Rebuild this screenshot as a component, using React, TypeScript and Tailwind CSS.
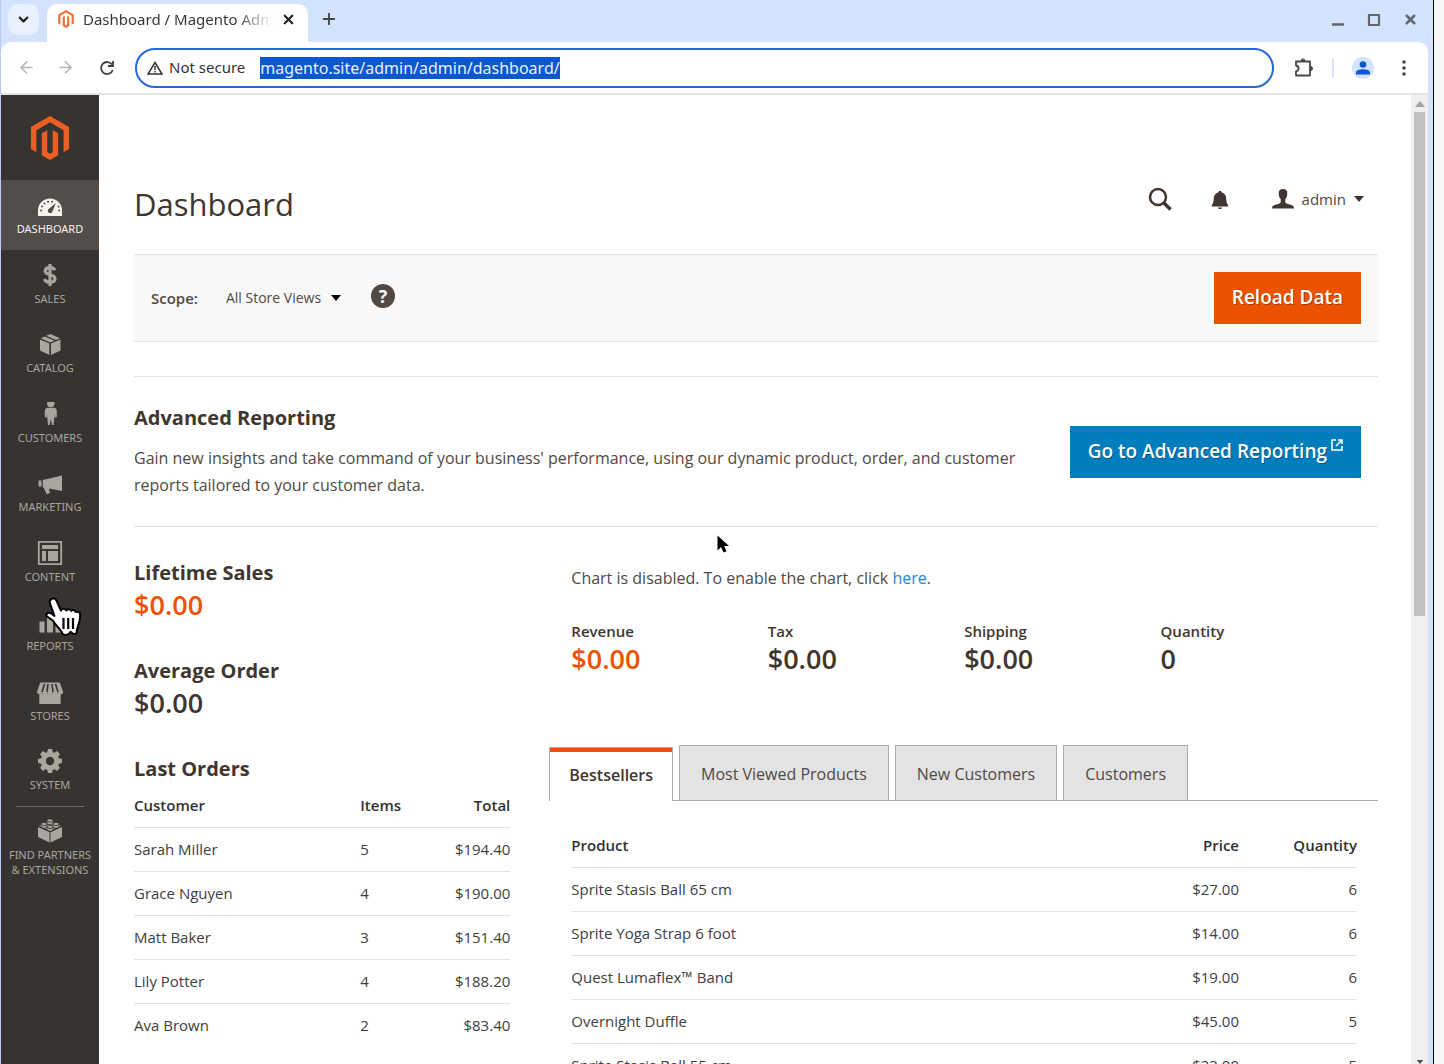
import type { ReactNode } from "react";
import { FaMagento } from "react-icons/fa";
import { ArrowLeft, ArrowRight, Plus, X, ChevronDown } from "lucide-react";

const gearTeeth = [0, 45, 90, 135, 180, 225, 270, 315];

function Icon({ children, className = "size-7" }: { children: ReactNode; className?: string }) {
  return (
    <svg viewBox="0 0 28 28" fill="currentColor" className={className} aria-hidden="true">
      {children}
    </svg>
  );
}

const menu: { label: string; icon: ReactNode }[] = [
  {
    label: "Dashboard",
    icon: (
      <Icon>
        <path d="M2 23v-5.500a12 12 0 0 1 24 0V23z" />
        <g fill="#524d49">
          <circle cx="5" cy="17.500" r="1" />
          <circle cx="6" cy="13.500" r="1" />
          <circle cx="8.500" cy="10.500" r="1" />
          <circle cx="12" cy="8.800" r="1" />
          <circle cx="16" cy="8.800" r="1" />
          <circle cx="22.500" cy="13.500" r="1" />
          <circle cx="23.200" cy="17.500" r="1" />
          <path d="M19.800 10l-3.300 8.500a2.400 2.400 0 1 1-3.700-2.600z" />
        </g>
      </Icon>
    ),
  },
  {
    label: "Sales",
    icon: (
      <Icon>
        <path
          d="M18.800 7.200c-.6-1.600-2.200-2.500-4.800-2.500-3.200 0-4.800 1.300-4.800 3.400 0 4.900 9.800 2.300 9.800 7.400 0 2.400-1.900 3.800-5 3.800-3.100 0-4.900-1.200-5.500-3.300M14 1v22"
          fill="none"
          stroke="currentColor"
          strokeWidth="3.200"
        />
      </Icon>
    ),
  },
  {
    label: "Catalog",
    icon: (
      <Icon>
        <path d="M4 7.500l9.400 4V23L4 18.500zM24.500 7.500L15 11.500V23l9.500-4.500zM4.800 6.200l4-1.700 9.700 4.200-4.300 1.700zM10.300 3.800l4-1.800 9.700 4.200-4 1.800z" />
      </Icon>
    ),
  },
  {
    label: "Customers",
    icon: (
      <Icon>
        <circle cx="14.800" cy="1.500" r="3.700" />
        <path d="M11.800 5.800h6c2 0 3 1.500 3 3.500v5c0 1.500-2 1.500-2 .5v-3.500L17.600 23h-1.600l-1.200-6-1.200 6H12l-1.200-11.700v3.500c0 1-2 1-2-.5v-5c0-2 1-3.500 3-3.500z" />
      </Icon>
    ),
  },
  {
    label: "Marketing",
    icon: (
      <Icon>
        <path d="M2.500 9.500h3v6h-3zM6.800 9L26 4.500v15.500L13 17.500l1 4.500-3.500 1.300-2.700-6.500-1-.3z" />
      </Icon>
    ),
  },
  {
    label: "Content",
    icon: (
      <Icon>
        <path d="M2.800.800h22.400v22.400H2.800z" fill="none" stroke="currentColor" strokeWidth="1.800" />
        <path d="M6 4h16v4H6zM6 10h4v10H6zM12 10h10v10H12z" />
      </Icon>
    ),
  },
  {
    label: "Reports",
    icon: (
      <Icon>
        <path d="M3.500 11.500h5v11h-5zM11 4.500h6v18h-6zM19.500 9h5v13.500h-5z" />
      </Icon>
    ),
  },
  {
    label: "Stores",
    icon: (
      <Icon>
        <path d="M3.300 13.500h21.400V24H3.300z" />
        <path d="M4.300 2.500h19.400l3.600 10H.7z" />
        <path d="M1 12h26c0 3-4.200 3-5.200.5-.8 2.500-4.400 2.500-5.200 0-.8 2.500-4.400 2.500-5.200 0-.8 2.500-4.400 2.500-5.200 0-.8 2.500-5.200 2-5.200-.5z" />
        <path d="M8.500 4l-2.500 8M12 4l-1 8M16 4l1 8M19.500 4l2.500 8" stroke="#373330" strokeWidth="1.600" />
      </Icon>
    ),
  },
  {
    label: "System",
    icon: (
      <Icon>
        <circle cx="14" cy="12" r="6.700" fill="none" stroke="currentColor" strokeWidth="5" />
        {gearTeeth.map((a) => (
          <path key={a} d="M11 4l1-4h4l1 4z" transform={`rotate(${a} 14 12)`} />
        ))}
      </Icon>
    ),
  },
];

function BrickIcon() {
  return (
    <Icon>
      <path d="M2 8l11.500 5.300v10.200L2 18zM26 8l-11.500 5.300v10.200L26 18z" />
      <path d="M3 6.800L14 2l11 4.800-11 5z" />
      <g stroke="#373330" strokeWidth=".8">
        <path d="M11 1.500v2.600c0 2 6 2 6 0V1.500z" />
        <ellipse cx="14" cy="1.500" rx="3" ry="1.600" />
        <path d="M5 5v2.600c0 2 6 2 6 0V5z" />
        <ellipse cx="8" cy="5" rx="3" ry="1.600" />
        <path d="M17 5v2.600c0 2 6 2 6 0V5z" />
        <ellipse cx="20" cy="5" rx="3" ry="1.600" />
        <path d="M11 8v2.600c0 2 6 2 6 0V8z" />
        <ellipse cx="14" cy="8" rx="3" ry="1.600" />
      </g>
    </Icon>
  );
}

function Caret({ className }: { className: string }) {
  return (
    <svg viewBox="0 0 10 6" fill="currentColor" className={className} aria-hidden="true">
      <path d="M0 0h10L5 6z" />
    </svg>
  );
}

function HandCursor() {
  return (
    <svg viewBox="0 0 38 42" className="pointer-events-none absolute -top-0.5 left-[43px] z-10 h-[42px] w-[38px]" aria-hidden="true">
      <path
        d="M7.500 4c2-1.300 4-.3 5 1.700L17 15.500c.6-2.300 4.300-2.500 5.200 0 .8-1.700 4.300-1.700 5 .5 1-1.500 3.800-1.200 4.500 1 1.700-.8 4.500 0 4.500 2.500 0 6-1 9.300-2.700 13.300l-1 5c-1.500 1.800-3.500 1.500-4.500 0l-1.500-1-1.500 2c-2 1.300-5 1.300-6.500 0-1.500-4-6-7.300-9.500-13L2.500 21c-1-2.500 2.500-4.500 5-2.300l3 2.300L6 8.500c-.7-1.800-.5-3.500 1.500-4.500z"
        fill="#fff"
        stroke="#000"
        strokeWidth="2"
        strokeLinejoin="round"
      />
      <path d="M19.500 23v11M24.200 23v11M29 23v11" stroke="#000" strokeWidth="2.200" />
    </svg>
  );
}

const orders = [
  ["Sarah Miller", "5", "$194.40"],
  ["Grace Nguyen", "4", "$190.00"],
  ["Matt Baker", "3", "$151.40"],
  ["Lily Potter", "4", "$188.20"],
  ["Ava Brown", "2", "$83.40"],
];

const products = [
  ["Sprite Stasis Ball 65 cm", "$27.00", "6"],
  ["Sprite Yoga Strap 6 foot", "$14.00", "6"],
  ["Quest Lumaflex™ Band", "$19.00", "6"],
  ["Overnight Duffle", "$45.00", "5"],
  ["Sprite Stasis Ball 55 cm", "$23.00", "5"],
];

const totals = [
  ["Revenue", "$0.00"],
  ["Tax", "$0.00"],
  ["Shipping", "$0.00"],
  ["Quantity", "0"],
];

function BrowserBar() {
  return (
    <header className="shrink-0 bg-[#d3e2fd]">
      <div className="flex h-[42px] items-start pl-[7px]">
        <button aria-label="Search tabs" className="mt-1 flex h-[31px] w-[31px] items-center justify-center rounded-[10px] bg-[#eaf1fe] text-[#222]">
          <ChevronDown size={15} strokeWidth={3.5} />
        </button>
        <div className="ml-2 mt-1 flex h-[38px] w-[261px] items-center rounded-t-[10px] bg-white pb-2 pl-2.5 pr-3">
          <FaMagento className="size-[18px] shrink-0 text-[#f46f35]" />
          <div className="ml-2 w-[190px] overflow-hidden whitespace-nowrap bg-linear-to-r from-[#333] from-80% to-transparent bg-clip-text text-[15px] text-transparent">
            Dashboard / Magento Admin
          </div>
          <button aria-label="Close tab" className="ml-2 text-[#222]">
            <X size={15} strokeWidth={3.5} />
          </button>
        </div>
        <button aria-label="New tab" className="ml-3 mt-2.5 text-[#444]">
          <Plus size={18} strokeWidth={2.5} />
        </button>
        <div className="ml-auto mr-[15px] mt-3 flex items-center gap-[22px] text-[#62666d]">
          <button aria-label="Minimize">
            <svg viewBox="0 0 14 14" className="size-3.5" aria-hidden="true">
              <path d="M1 11.500h12" stroke="currentColor" strokeWidth="2.500" />
            </svg>
          </button>
          <button aria-label="Maximize">
            <svg viewBox="0 0 14 14" className="size-3.5" aria-hidden="true">
              <path d="M2 2h10v10H2z" fill="none" stroke="currentColor" strokeWidth="2.200" />
            </svg>
          </button>
          <button aria-label="Close window">
            <X size={15} strokeWidth={4} />
          </button>
        </div>
      </div>
      <div className="mr-[5px] flex h-[53px] items-center rounded-t-[10px] border-b-2 border-[#e4e4e4] bg-white pl-4 pr-4">
        <button aria-label="Back" className="text-[#b4b4b4]">
          <ArrowLeft size={19} />
        </button>
        <button aria-label="Forward" className="ml-5 text-[#b4b4b4]">
          <ArrowRight size={19} />
        </button>
        <button aria-label="Reload" className="ml-6 text-[#3c3f43]">
          <svg viewBox="0 0 16 16" fill="none" stroke="currentColor" strokeWidth="1.800" className="size-4" aria-hidden="true">
            <path d="M13.800 10A6 6 0 1 1 13 4.500" />
            <path d="M14 1v5h-5" />
          </svg>
        </button>
        <div className="ml-5 flex h-10 flex-1 items-center rounded-full border-2 border-[#2469d8] pl-2.5">
          <svg viewBox="0 0 16 14" fill="none" stroke="#333" strokeWidth="1.500" className="h-3.5 w-4" aria-hidden="true">
            <path d="M8 1.500L15 13H1z" />
            <path d="M8 5v4M8 10v1.500" />
          </svg>
          <span className="ml-1.5 text-[15px] text-[#333]">Not secure</span>
          <input
            aria-label="Address"
            defaultValue="magento.site/admin/admin/dashboard/"
            className="ml-[15px] h-[22px] field-sizing-content bg-[#0b57d0] text-base text-[#e8f0fe] outline-none"
          />
        </div>
        <button aria-label="Extensions" className="ml-5 text-[#45484d]">
          <svg viewBox="0 0 20 20" fill="none" stroke="currentColor" strokeWidth="1.800" strokeLinejoin="round" className="size-5" aria-hidden="true">
            <path d="M2 3.500h14v14H2v-4c3.500-.8 3.500-5.200 0-6z" />
            <path d="M7 2.800a2 1.800 0 0 1 4 0zM16.700 8.500a1.800 2 0 0 1 0 4z" fill="currentColor" strokeWidth="1" />
          </svg>
        </button>
        <span className="ml-[18px] h-[18px] w-0.5 bg-[#d3e2fd]" />
        <button aria-label="Profile" className="ml-[18px] flex size-[22px] items-center justify-center rounded-full bg-[#d3e2fd] text-[#0b57d0]">
          <svg viewBox="0 0 14 14" fill="currentColor" className="size-3.5" aria-hidden="true">
            <circle cx="7" cy="3.500" r="3.300" />
            <path d="M0 13.500v-2C0 7.300 14 7.300 14 11.500v2z" />
          </svg>
        </button>
        <button aria-label="Browser menu" className="ml-[22px] text-[#444]">
          <svg viewBox="0 0 16 16" fill="currentColor" className="size-4" aria-hidden="true">
            <circle cx="8" cy="2" r="1.800" />
            <circle cx="8" cy="8" r="1.800" />
            <circle cx="8" cy="14" r="1.800" />
          </svg>
        </button>
      </div>
    </header>
  );
}

function Sidebar() {
  return (
    <nav className="w-[98px] shrink-0 bg-[#373330] text-[11px] uppercase leading-[15px] text-[#a9a69d]">
      <a href="#home" aria-label="Magento Admin" className="flex h-[85px] items-center justify-center text-[#eb5f25]">
        <FaMagento className="size-11" />
      </a>
      <div className="grid h-[626px] grid-rows-9">
        {menu.map((m, i) => (
          <a
            key={m.label}
            href={"#" + m.label.toLowerCase()}
            className={
              i === 0
                ? "flex flex-col items-center bg-[#524d49] pt-[13px] text-[#f7f3eb]"
                : "relative flex flex-col items-center pt-[13px]"
            }
          >
            {m.icon}
            <span>{m.label}</span>
            {m.label === "Reports" && <HandCursor />}
          </a>
        ))}
      </div>
      <div className="mx-auto w-[68px] border-t border-[#736963]" />
      <a href="#partners" className="mt-3 flex flex-col items-center text-center">
        <BrickIcon />
        <span>
          Find Partners
          <br />& Extensions
        </span>
      </a>
    </nav>
  );
}

function PageHeader() {
  return (
    <div className="flex items-center pb-[31px] pt-[90px] pr-3.5">
      <h1 className="text-[31px] leading-[38px]">Dashboard</h1>
      <div className="mb-2.5 ml-auto flex items-center">
        <button aria-label="Search">
          <svg viewBox="0 0 24 24" fill="none" stroke="currentColor" className="size-6" aria-hidden="true">
            <circle cx="10" cy="10" r="8" strokeWidth="2.500" />
            <path d="M15.500 15.500L22.500 22.500" strokeWidth="3.500" />
          </svg>
        </button>
        <button aria-label="Notifications" className="ml-9">
          <svg viewBox="0 0 24 24" fill="currentColor" className="size-6" aria-hidden="true">
            <path d="M12 4c1 0 1.500.6 1.700 1.400 3.500.9 4.500 3.600 4.600 7 .1 3.200.8 4.500 1.900 5.700v1.400H3.800v-1.400c1.100-1.200 1.800-2.500 1.900-5.700.1-3.400 1.100-6.100 4.600-7C10.500 4.600 11 4 12 4zM10 20.500h4c0 2-4 2-4 0z" />
          </svg>
        </button>
        <button className="ml-10 flex items-center text-[15px]">
          <svg viewBox="0 0 22 22" fill="currentColor" className="size-[22px]" aria-hidden="true">
            <path d="M11 1c3 0 4.500 1.500 4.300 4.500-.2 2.500-.7 4.200-2 5.500v3c0 1.200 1 1.700 3.200 2.200 3.500.8 5.500 1.300 5.500 4.300H0c0-3 2-3.500 5.500-4.300 2.200-.5 3.200-1 3.200-2.200v-3c-1.300-1.300-1.800-3-2-5.500C6.500 2.500 8 1 11 1z" />
          </svg>
          <span className="ml-2 text-[#514943]">admin</span>
          <Caret className="ml-2 h-1.5 w-2.5" />
        </button>
      </div>
    </div>
  );
}

function ScopeBar() {
  return (
    <div className="flex h-[88px] items-center border-y border-[#e3e3e3] bg-[#f8f8f8] px-[17px] text-[15px]">
      <label htmlFor="scope" className="font-semibold text-[#514943]">
        Scope:
      </label>
      <div className="relative ml-7 flex items-center">
        <select id="scope" className="field-sizing-content appearance-none bg-transparent pr-6 text-sm text-[#514943] outline-none">
          <option>All Store Views</option>
        </select>
        <Caret className="pointer-events-none absolute right-1 h-1.5 w-2.5 text-black" />
      </div>
      <button aria-label="Help" className="mb-1 ml-[26px] flex size-6 items-center justify-center rounded-full bg-[#514943] text-lg font-bold text-[#f8f8f8]">
        ?
      </button>
      <button className="ml-auto h-[52px] bg-[#eb5202] px-[18px] pb-0.5 text-[19px] font-semibold text-white [text-shadow:1px_1px_0_rgba(0,0,0,.3)]">
        Reload Data
      </button>
    </div>
  );
}

function AdvancedReporting() {
  return (
    <section className="mt-[34px] flex items-center justify-between border-y border-[#e3e3e3] pb-[26px] pr-[17px] pt-[27px]">
      <div className="max-w-[890px]">
        <h2 className="text-xl font-bold leading-7">Advanced Reporting</h2>
        <p className="mt-[13px] pb-px text-base leading-[27px] text-[#514943]">
          Gain new insights and take command of your business' performance, using our dynamic product, order, and customer reports tailored to your customer data.
        </p>
      </div>
      <a href="#reporting" className="flex h-[52px] shrink-0 items-center bg-[#007dbd] px-[18px] pb-0.5 text-[19px] font-semibold text-white [text-shadow:1px_1px_0_rgba(0,0,0,.3)]">
        Go to Advanced Reporting
        <svg viewBox="0 0 12 12" fill="none" stroke="currentColor" strokeWidth="1.500" className="mb-3 ml-1 size-3" aria-hidden="true">
          <path d="M5 1H1v10h10V7M7 1h4v4M11 1L5 7" />
        </svg>
      </a>
    </section>
  );
}

function Metric({ title, value, accent }: { title: string; value: string; accent?: boolean }) {
  return (
    <div className="h-[98px]">
      <h3 className="text-xl font-bold leading-7">{title}</h3>
      <p className={accent ? "text-[27px] font-semibold leading-9 text-[#eb5202]" : "text-[27px] font-semibold leading-9"}>{value}</p>
    </div>
  );
}

function LastOrders() {
  return (
    <>
      <h3 className="text-xl font-bold leading-7">Last Orders</h3>
      <table className="w-full text-[15px] text-[#404040]">
        <thead>
          <tr className="h-[44px] border-b border-[#e3e3e3] text-[#303030]">
            <th className="text-left font-semibold">Customer</th>
            <th className="w-[75px] text-left font-semibold">Items</th>
            <th className="w-[75px] text-right font-semibold">Total</th>
          </tr>
        </thead>
        <tbody>
          {orders.map(([name, items, total]) => (
            <tr key={name} className="h-[44px] border-b border-[#e3e3e3] last:border-0">
              <td>{name}</td>
              <td>{items}</td>
              <td className="text-right">{total}</td>
            </tr>
          ))}
        </tbody>
      </table>
    </>
  );
}

function ProductTabs() {
  return (
    <>
      <div role="tablist" className="mt-[70px] flex items-end gap-1.5 border-b border-[#adadad] text-base">
        <button role="tab" aria-selected="true" className="-mb-px h-[54px] border border-b-0 border-[#adadad] bg-white font-semibold">
          <span className="flex h-full items-center border-t-4 border-[#eb5202] px-[19px] pb-1">Bestsellers</span>
        </button>
        {["Most Viewed Products", "New Customers", "Customers"].map((t) => (
          <button key={t} role="tab" aria-selected="false" className="h-[55px] border border-b-0 border-[#adadad] bg-[#e3e3e3] px-[21px] pt-0.5 text-[#514943]">
            {t}
          </button>
        ))}
      </div>
      <div className="pl-[22px] pr-[21px] pt-[22px]">
        <table className="w-full text-[15px] text-[#404040]">
          <thead>
            <tr className="h-[44px] border-b border-[#e3e3e3] text-[#303030]">
              <th className="text-left font-semibold">Product</th>
              <th className="w-[120px] text-right font-semibold">Price</th>
              <th className="w-[118px] text-right font-semibold">Quantity</th>
            </tr>
          </thead>
          <tbody>
            {products.map(([name, price, qty]) => (
              <tr key={name} className="h-[44px] border-b border-[#e3e3e3]">
                <td>{name}</td>
                <td className="text-right">{price}</td>
                <td className="text-right">{qty}</td>
              </tr>
            ))}
          </tbody>
        </table>
      </div>
    </>
  );
}

export default function App() {
  return (
    <div className="flex h-screen overflow-hidden bg-[#f8f8f8] pr-2.5 font-['Noto_Sans',sans-serif]">
      <div className="flex min-w-0 flex-1 flex-col border-l border-r border-l-[#b5cdf5] border-r-black bg-[#d3e2fd]">
        <BrowserBar />
        <div className="mr-[5px] flex min-h-0 flex-1 bg-white">
          <Sidebar />
          <main className="min-w-0 flex-1 overflow-hidden pl-[35px] pr-[33px] font-['Open_Sans',sans-serif] text-[#41362f]">
            <PageHeader />
            <ScopeBar />
            <AdvancedReporting />
            <div className="grid grid-cols-[376fr_828fr] gap-[39px] pt-8">
              <section>
                <Metric title="Lifetime Sales" value="$0.00" accent />
                <Metric title="Average Order" value="$0.00" />
                <LastOrders />
              </section>
              <section>
                <div className="pl-[22px] pr-[21px] pt-[5px]">
                  <p className="text-base leading-7 text-[#514943]">
                    Chart is disabled. To enable the chart, click{" "}
                    <a href="#chart" className="text-[#1787e0]">
                      here
                    </a>
                    .
                  </p>
                  <dl className="mt-[27px] grid grid-cols-4">
                    {totals.map(([name, value], i) => (
                      <div key={name}>
                        <dt className="text-[15px] font-semibold leading-6">{name}</dt>
                        <dd className={i === 0 ? "text-[27px] font-semibold leading-8 text-[#eb5202]" : "text-[27px] font-semibold leading-8"}>{value}</dd>
                      </div>
                    ))}
                  </dl>
                </div>
                <ProductTabs />
              </section>
            </div>
          </main>
          <div className="flex w-[17px] shrink-0 flex-col items-center justify-between bg-[#f0f0f0] pt-1.5">
            <div className="flex flex-col items-center gap-[5px]">
              <Caret className="h-1.5 w-2.5 rotate-180 text-[#a3a3a3]" />
              <div className="h-[504px] w-[11px] bg-[#c1c1c1]" />
            </div>
            <Caret className="h-1 w-2.5 text-[#505050]" />
          </div>
        </div>
      </div>
      <svg viewBox="0 0 12 18" className="pointer-events-none absolute left-[717px] top-[535px] h-[18px] w-3" aria-hidden="true">
        <path d="M.5.500v15l3.500-3.500 2.500 5.500 3-1.300-2.300-5.200H12z" fill="#000" />
      </svg>
    </div>
  );
}
